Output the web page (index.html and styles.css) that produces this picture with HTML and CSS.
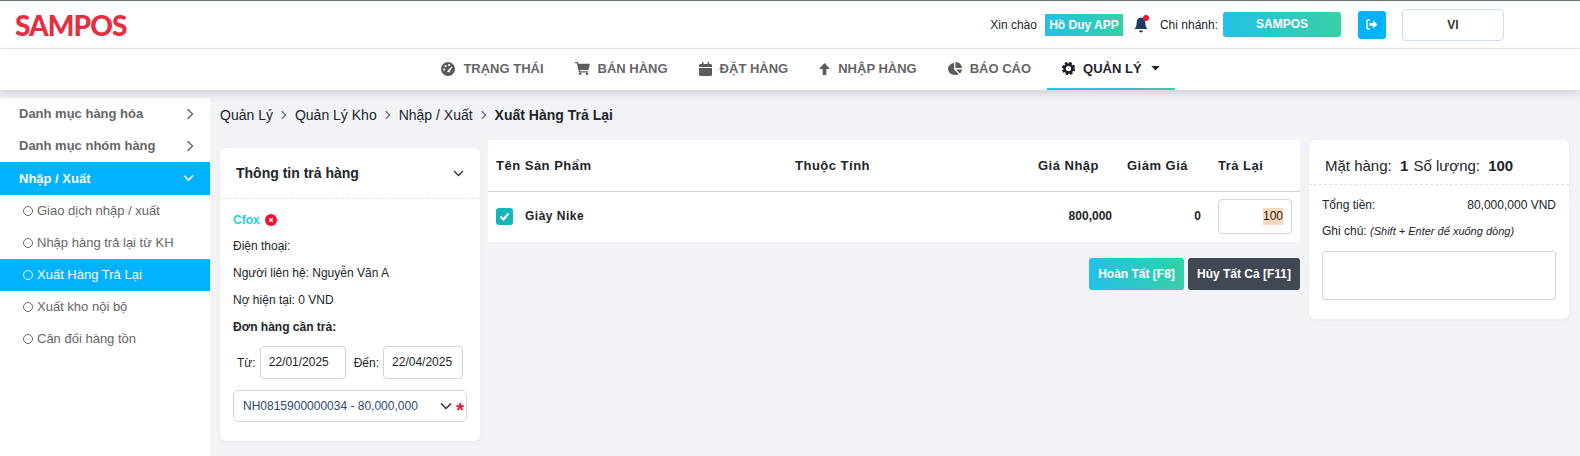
FILE: index.html
```html
<!DOCTYPE html>
<html lang="vi">
<head>
  <meta charset="UTF-8" />
  <title>Xuất Hàng Trả Lại | SAMPOS</title>
  <link rel="stylesheet" href="styles.css">
</head>
<body>
  <header class="topbar">
    <div class="logo">SAMPOS</div>
    <div class="topbar-right">
      <span class="hello">Xin chào</span>
      <span class="user-badge">Hồ Duy APP</span>
      <span class="bell">
        <svg width="14" height="18" viewBox="0 0 14 18"><path d="M7 1.5c-2.8 0-4.3 2.2-4.3 5 0 3.5-.9 5-2.2 6.500h13c-1.300-1.500-2.200-3-2.200-6.500 0-2.800-1.500-5-4.300-5z" fill="#1f3a5f"/><path d="M5 14.500h4c0 1.300-.9 2-2 2s-2-.7-2-2z" fill="#1f3a5f"/></svg>
        <i class="bell-dot"></i>
      </span>
      <span class="branch-label">Chi nhánh:</span>
      <span class="branch-btn">SAMPOS</span>
      <span class="logout-btn">
        <svg width="12" height="11" viewBox="0 0 12 11"><path d="M4 1H2C1.300 1 1 1.400 1 2v7c0 .6.3 1 1 1h2" fill="none" stroke="#fff" stroke-width="1.500"/><path d="M3.500 4h3.500V1.500l4.500 4-4.500 4V7H3.500z" fill="#fff"/></svg>
      </span>
      <span class="lang-btn">VI</span>
    </div>
  </header>

  <nav class="mainnav">
    <a class="nav-item">
      <svg width="14" height="14" viewBox="0 0 14 14"><circle cx="7" cy="7" r="7" fill="#5c5c5c"/><circle cx="3.200" cy="7.500" r="1.100" fill="#fff"/><circle cx="4.500" cy="4" r="1.100" fill="#fff"/><circle cx="8" cy="3" r="1.100" fill="#fff"/><path d="M6 9.500l4.500-5 .8.500-3.200 5.500z" fill="#fff"/></svg>
      TRẠNG THÁI
    </a>
    <a class="nav-item">
      <svg width="15" height="13" viewBox="0 0 16 14"><path d="M0 0h3l.5 2H16l-1.500 6.500H5l.3 1.500h9v1.300H4.200L2 1.300H0z" fill="#5c5c5c"/><circle cx="5.500" cy="12.600" r="1.400" fill="#5c5c5c"/><circle cx="12.800" cy="12.600" r="1.400" fill="#5c5c5c"/></svg>
      BÁN HÀNG
    </a>
    <a class="nav-item">
      <svg width="13" height="14" viewBox="0 0 13 14"><path d="M3 0h1.500v2h4V0H10v2h1.500C12.400 2 13 2.600 13 3.500V5H0V3.500C0 2.600.6 2 1.500 2H3zM0 6h13v6.500c0 .9-.6 1.500-1.500 1.500h-10C.6 14 0 13.400 0 12.500z" fill="#5c5c5c"/></svg>
      ĐẶT HÀNG
    </a>
    <a class="nav-item">
      <svg width="11" height="12" viewBox="0 0 12 13"><path d="M6 0l6 6.500H8V13H4V6.500H0z" fill="#5c5c5c"/></svg>
      NHẬP HÀNG
    </a>
    <a class="nav-item">
      <svg width="14" height="13" viewBox="0 0 15 14"><path d="M6.500 1v7l5 5c-1.300.7-2.400 1-4 1C3.400 14 0 11 0 7.300 0 4 2.900 1.300 6.500 1z" fill="#5c5c5c"/><path d="M8 0c3.800 0 7 3 7 6.500H8z" fill="#5c5c5c"/><path d="M8.500 8H15c-.2 1.700-1 3.300-2.200 4.400z" fill="#5c5c5c"/></svg>
      BÁO CÁO
    </a>
    <a class="nav-item active">
      <svg width="13" height="13" viewBox="0 0 14 14"><circle cx="7" cy="7" r="4.200" fill="none" stroke="#1f2329" stroke-width="2.800"/><circle cx="7" cy="7" r="6" fill="none" stroke="#1f2329" stroke-width="2.400" stroke-dasharray="2.900 1.810"/></svg>
      QUẢN LÝ
      <svg class="caret" width="9" height="5" viewBox="0 0 10 6"><path d="M0 0h10L5 5.500z" fill="#1f2329"/></svg>
    </a>
  </nav>

  <div class="page">
    <aside class="sidebar">
      <div class="side-group">Danh mục hàng hóa
        <svg width="8" height="12" viewBox="0 0 8 12"><path d="M1.500 1l5 5-5 5" fill="none" stroke="#666" stroke-width="1.400"/></svg>
      </div>
      <div class="side-group">Danh mục nhóm hàng
        <svg width="8" height="12" viewBox="0 0 8 12"><path d="M1.500 1l5 5-5 5" fill="none" stroke="#666" stroke-width="1.400"/></svg>
      </div>
      <div class="side-group open">Nhập / Xuất
        <svg width="11" height="8" viewBox="0 0 11 8"><path d="M1 1.500l4.500 4.500 4.500-4.500" fill="none" stroke="#fff" stroke-width="1.600"/></svg>
      </div>
      <div class="side-sub">Giao dịch nhập / xuất</div>
      <div class="side-sub">Nhập hàng trả lại từ KH</div>
      <div class="side-sub selected">Xuất Hàng Trả Lại</div>
      <div class="side-sub">Xuất kho nội bộ</div>
      <div class="side-sub">Cân đối hàng tồn</div>
    </aside>

    <main class="content">
      <div class="breadcrumb">
        <span>Quản Lý</span><i class="sep"></i>
        <span>Quản Lý Kho</span><i class="sep"></i>
        <span>Nhập / Xuất</span><i class="sep"></i>
        <strong>Xuất Hàng Trả Lại</strong>
      </div>

      <div class="columns">
        <section class="card info-card">
          <div class="info-head">
            <span>Thông tin trả hàng</span>
            <svg width="11" height="7" viewBox="0 0 11 7"><path d="M1 1l4.500 4.500L10 1" fill="none" stroke="#333" stroke-width="1.300"/></svg>
          </div>
          <div class="info-body">
            <div class="supplier">Cfox
              <span class="remove-dot">
                <svg width="6" height="6" viewBox="0 0 6 6"><path d="M1.200 1.200l3.600 3.600M4.800 1.200L1.200 4.800" stroke="#fff" stroke-width="1.300"/></svg>
              </span>
            </div>
            <div class="info-line">Điện thoại:</div>
            <div class="info-line">Người liên hệ: Nguyễn Văn A</div>
            <div class="info-line">Nợ hiện tại: 0 VND</div>
            <div class="info-title">Đơn hàng cần trả:</div>
            <div class="date-row">
              <label>Từ:</label>
              <div class="date-box from">22/01/2025</div>
              <label>Đến:</label>
              <div class="date-box to">22/04/2025</div>
            </div>
            <div class="order-select">
              <span>NH0815900000034 - 80,000,000</span>
              <svg width="12" height="8" viewBox="0 0 12 8"><path d="M1 1.500l5 5 5-5" fill="none" stroke="#333" stroke-width="1.500"/></svg>
              <b class="required">*</b>
            </div>
          </div>
        </section>

        <section class="middle">
          <table class="product-table">
            <thead>
              <tr>
                <th class="col-name">Tên Sản Phẩm</th>
                <th class="col-attr">Thuộc Tính</th>
                <th class="col-price num">Giá Nhập</th>
                <th class="col-discount num">Giảm Giá</th>
                <th class="col-return">Trả Lại</th>
              </tr>
            </thead>
            <tbody>
              <tr>
                <td class="col-name">
                  <div class="product-name">
                    <span class="check">
                      <svg width="11" height="9" viewBox="0 0 11 9"><path d="M1.500 4.500l3 3 5-6" fill="none" stroke="#fff" stroke-width="2"/></svg>
                    </span>
                    Giày Nike
                  </div>
                </td>
                <td></td>
                <td class="num">800,000</td>
                <td class="num">0</td>
                <td class="col-return"><div class="qty-box"><span>100</span></div></td>
              </tr>
            </tbody>
          </table>
          <div class="actions">
            <span class="btn btn-finish">Hoàn Tất [F8]</span>
            <span class="btn btn-cancel">Hủy Tất Cả [F11]</span>
          </div>
        </section>

        <section class="card summary-card">
          <div class="summary-head">Mặt hàng: <b>1</b> Số lượng: <b>100</b></div>
          <div class="summary-body">
            <div class="total-row"><span>Tổng tiền:</span><span>80,000,000 VND</span></div>
            <div class="note-label">Ghi chú: <em>(Shift + Enter để xuống dòng)</em></div>
            <div class="note-box"></div>
          </div>
        </section>
      </div>
    </main>
  </div>
</body>
</html>
```

FILE: styles.css
```css
* {
  box-sizing: border-box;
}

html, body {
  height: 100%;
}

body {
  margin: 0;
  font-family: "Liberation Sans", Arial, sans-serif;
  font-size: 12px;
  color: #212529;
  background: #f1f3f7;
  overflow: hidden;
}

/* top bar */
.topbar {
  height: 49px;
  display: flex;
  align-items: center;
  justify-content: space-between;
  padding: 0 76px 0 15px;
  background: #fff;
  border-top: 1px solid #66757f;
  border-bottom: 1px solid #e4e5e7;
}

.logo {
  font-family: Lato, sans-serif;
  font-weight: 900;
  font-size: 28px;
  letter-spacing: -0.9px;
  line-height: 1;
  color: #e62e42;
}

.topbar-right {
  display: flex;
  align-items: center;
}

.hello {
  margin-right: 8px;
}

.user-badge {
  width: 78px;
  height: 22px;
  line-height: 22px;
  text-align: center;
  font-weight: 700;
  color: #fff;
  background: linear-gradient(90deg, #22c1e6, #36cfa8);
}

.bell {
  position: relative;
  display: flex;
  margin: 0 12px 0 11px;
}

.bell-dot {
  position: absolute;
  top: -1px;
  right: -1px;
  width: 6px;
  height: 6px;
  border-radius: 50%;
  background: #f5112e;
}

.branch-label {
  margin-right: 5px;
}

.branch-btn {
  width: 118px;
  height: 25px;
  line-height: 25px;
  text-align: center;
  font-weight: 700;
  color: #fff;
  border-radius: 3px;
  background: linear-gradient(90deg, #22c1e6, #3ad0a4);
}

.logout-btn {
  width: 28px;
  height: 28px;
  margin: 0 16px 0 17px;
  display: flex;
  align-items: center;
  justify-content: center;
  border-radius: 3px;
  background: #00b2ff;
}

.lang-btn {
  width: 102px;
  height: 32px;
  line-height: 30px;
  text-align: center;
  font-weight: 700;
  color: #333;
  border: 1px solid #c9dcf5;
  border-radius: 4px;
}

/* main menu */
.mainnav {
  height: 41px;
  display: flex;
  justify-content: center;
  padding-left: 21px;
  background: #fff;
  box-shadow: 0 4px 8px rgba(60, 70, 90, 0.18);
  position: relative;
}

.nav-item {
  display: flex;
  align-items: center;
  gap: 8px;
  padding: 0 15.5px;
  font-size: 13px;
  font-weight: 700;
  color: #666;
  border-bottom: 2px solid transparent;
}

.nav-item.active {
  color: #1f2329;
  border-image: linear-gradient(90deg, #22c1e6, #36cfa8) 1;
}

.caret {
  margin-left: 1px;
}

/* page */
.page {
  display: flex;
  height: calc(100% - 90px);
}

.sidebar {
  width: 210px;
  flex-shrink: 0;
  margin-top: 8px;
  padding-bottom: 10px;
  background: #fff;
}

.side-group {
  height: 32px;
  display: flex;
  align-items: center;
  justify-content: space-between;
  padding: 0 16px 1px 19px;
  font-size: 13px;
  font-weight: 700;
  color: #666;
}

.side-group.open {
  height: 33px;
  color: #fff;
  background: #00b2ff;
}

.side-sub {
  height: 32px;
  display: flex;
  align-items: center;
  padding: 0 0 2px 37px;
  position: relative;
  font-size: 13px;
  color: #666;
}

.side-sub::before {
  content: "";
  position: absolute;
  left: 23px;
  top: 11px;
  width: 8px;
  height: 8px;
  border: 1px solid #666;
  border-radius: 50%;
}

.side-sub.selected {
  color: #fff;
  background: #00b2ff;
}

.side-sub.selected::before {
  border-color: #fff;
}

.content {
  flex: 1;
  padding: 0 11px 0 10px;
}

.breadcrumb {
  height: 50px;
  display: flex;
  align-items: center;
  font-size: 14px;
  color: #212529;
}

.breadcrumb strong {
  font-weight: 700;
}

.sep {
  width: 6px;
  height: 6px;
  margin: 0 10px 0 6px;
  border-top: 1px solid #555;
  border-right: 1px solid #555;
  transform: rotate(45deg);
}

.columns {
  display: flex;
  align-items: flex-start;
  gap: 8px;
}

.card {
  background: #fff;
  border-radius: 6px;
  box-shadow: 0 1px 4px rgba(60, 70, 90, 0.06);
}

/* left card */
.info-card {
  width: 260px;
  flex-shrink: 0;
  height: 293px;
  margin-top: 8px;
}

.info-head {
  height: 51px;
  display: flex;
  align-items: center;
  justify-content: space-between;
  padding: 0 16px;
  font-size: 14px;
  font-weight: 700;
  border-bottom: 1px dashed #dfe2e6;
}

.info-body {
  padding: 13px 13px 0;
}

.supplier {
  display: flex;
  align-items: center;
  gap: 5px;
  height: 16px;
  margin-bottom: -2px;
  font-weight: 700;
  color: #28cedd;
}

.remove-dot {
  width: 12px;
  height: 12px;
  display: flex;
  align-items: center;
  justify-content: center;
  border-radius: 50%;
  background: #f5112e;
}

.info-line {
  height: 27px;
  padding-top: 10px;
  line-height: 20px;
}

.info-title {
  margin-top: 10px;
  line-height: 20px;
  font-weight: 700;
}

.date-row {
  display: flex;
  align-items: center;
  margin-top: 9px;
  padding-left: 4px;
}

.date-box {
  height: 33px;
  line-height: 31px;
  padding-left: 8px;
  border: 1px solid #ced4da;
  border-radius: 4px;
  margin-left: 4px;
}

.date-box.from {
  width: 86px;
  margin-right: 8px;
}

.date-box.to {
  width: 80px;
  margin-left: 4px;
}

.order-select {
  height: 32px;
  margin-top: 11px;
  display: flex;
  align-items: center;
  padding: 0 2px 0 9px;
  border: 1px solid #ced4da;
  border-radius: 6px;
  color: #2c4a6e;
}

.order-select span {
  flex: 1;
}

.required {
  margin-left: 4px;
  font-size: 20px;
  line-height: 1;
  height: 12px;
  color: #f5112e;
}

/* table */
.middle {
  width: 812px;
  flex-shrink: 0;
}

.product-table {
  width: 100%;
  table-layout: fixed;
  border-collapse: collapse;
  background: #fff;
}

.product-table th {
  height: 51px;
  padding: 0;
  text-align: left;
  font-size: 13px;
  font-weight: 700;
  letter-spacing: 0.5px;
  border-bottom: 1px solid #cfd1d4;
}

.product-table td {
  height: 51px;
  padding: 0 0 1px;
  font-weight: 700;
}

.product-table .num {
  text-align: right;
}

.product-table th.num {
  padding-right: 13px;
}

.product-table .col-name {
  width: 307px;
  padding-left: 8px;
}

.col-attr {
  width: 204px;
}

.col-price {
  width: 113px;
}

.col-discount {
  width: 89px;
}

.product-table th.col-return {
  padding-left: 17px;
}

.product-table td.col-return {
  padding: 0 8px 0 17px;
}

.product-name {
  display: flex;
  align-items: center;
  gap: 12px;
  letter-spacing: 0.5px;
}

.check {
  width: 17px;
  height: 17px;
  display: flex;
  align-items: center;
  justify-content: center;
  border-radius: 3px;
  background: #14b6b8;
}

.qty-box {
  height: 35px;
  display: flex;
  align-items: center;
  justify-content: flex-end;
  padding-right: 8px;
  font-weight: 400;
  border: 1px solid #ced4da;
  border-radius: 4px;
}

.qty-box span {
  background: #fcd7bb;
  line-height: 17px;
}

.actions {
  display: flex;
  justify-content: flex-end;
  gap: 4px;
  margin-top: 16px;
}

.btn {
  height: 32px;
  line-height: 32px;
  text-align: center;
  font-weight: 700;
  color: #fff;
  border-radius: 3px;
}

.btn-finish {
  width: 95px;
  background: linear-gradient(90deg, #22c1e6, #36cfa8);
}

.btn-cancel {
  width: 112px;
  background: #3f4853;
}

/* right card */
.summary-card {
  width: 260px;
  flex-shrink: 0;
  height: 179px;
  margin-left: 1px;
}

.summary-head {
  height: 45px;
  padding: 18px 16px 0;
  line-height: 16px;
  font-size: 15px;
  border-bottom: 1px dashed #dfe2e6;
}

.summary-head b {
  margin: 0 1px 0 4px;
}

.summary-body {
  padding: 0 13px;
}

.total-row {
  display: flex;
  justify-content: space-between;
  margin-top: 12px;
  line-height: 16px;
}

.note-label {
  margin-top: 10px;
  line-height: 16px;
}

.note-label em {
  font-size: 11px;
}

.note-box {
  height: 49px;
  margin-top: 12px;
  border: 1px solid #ced4da;
  border-radius: 3px;
}
```
